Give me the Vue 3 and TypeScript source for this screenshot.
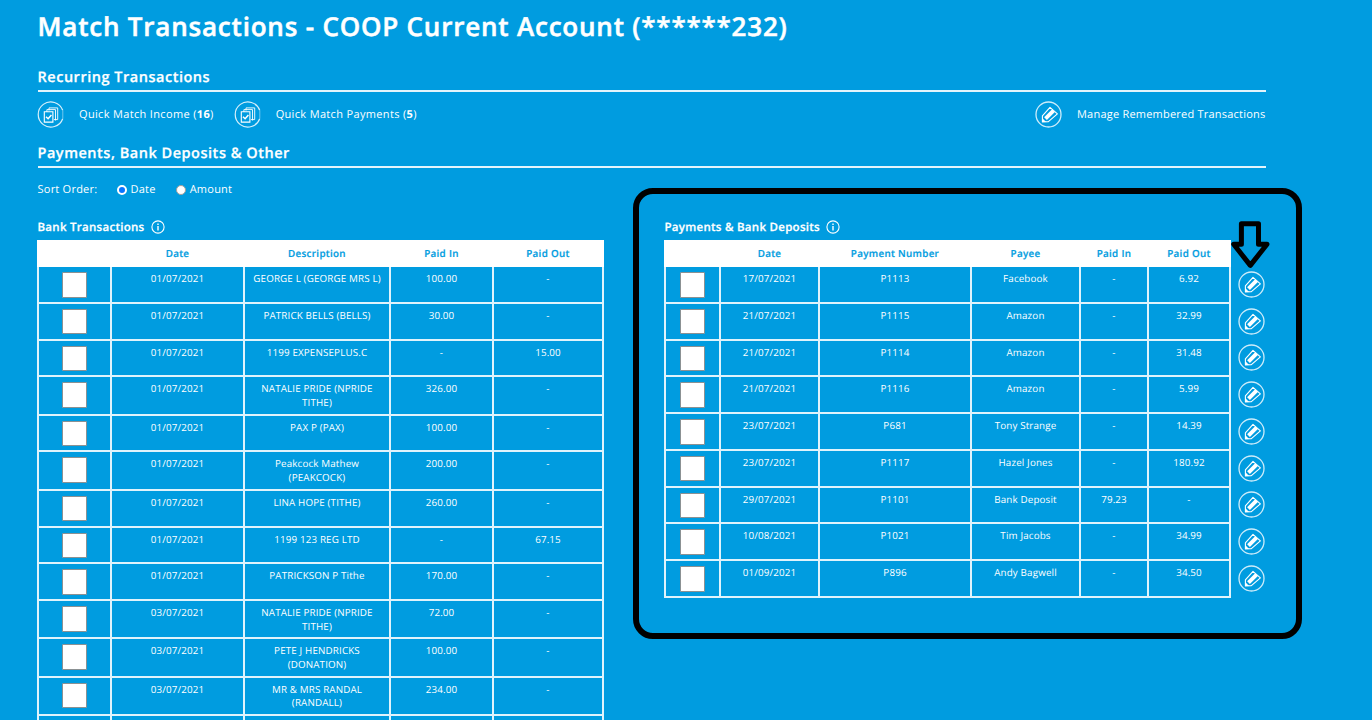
<script setup lang="ts">
interface BankRow {
  date: string
  description: string[]
  paidIn: string
  paidOut: string
}

interface PaymentRow {
  date: string
  number: string
  payee: string
  paidIn: string
  paidOut: string
}

const bankRows: BankRow[] = [
  { date: '01/07/2021', description: ['GEORGE L (GEORGE MRS L)'], paidIn: '100.00', paidOut: '-' },
  { date: '01/07/2021', description: ['PATRICK BELLS (BELLS)'], paidIn: '30.00', paidOut: '-' },
  { date: '01/07/2021', description: ['1199 EXPENSEPLUS.C'], paidIn: '-', paidOut: '15.00' },
  { date: '01/07/2021', description: ['NATALIE PRIDE (NPRIDE', 'TITHE)'], paidIn: '326.00', paidOut: '-' },
  { date: '01/07/2021', description: ['PAX P (PAX)'], paidIn: '100.00', paidOut: '-' },
  { date: '01/07/2021', description: ['Peakcock Mathew', '(PEAKCOCK)'], paidIn: '200.00', paidOut: '-' },
  { date: '01/07/2021', description: ['LINA HOPE (TITHE)'], paidIn: '260.00', paidOut: '-' },
  { date: '01/07/2021', description: ['1199 123 REG LTD'], paidIn: '-', paidOut: '67.15' },
  { date: '01/07/2021', description: ['PATRICKSON P Tithe'], paidIn: '170.00', paidOut: '-' },
  { date: '03/07/2021', description: ['NATALIE PRIDE (NPRIDE', 'TITHE)'], paidIn: '72.00', paidOut: '-' },
  { date: '03/07/2021', description: ['PETE J HENDRICKS', '(DONATION)'], paidIn: '100.00', paidOut: '-' },
  { date: '03/07/2021', description: ['MR & MRS RANDAL', '(RANDALL)'], paidIn: '234.00', paidOut: '-' },
  { date: '', description: [''], paidIn: '', paidOut: '' },
]

const paymentRows: PaymentRow[] = [
  { date: '17/07/2021', number: 'P1113', payee: 'Facebook', paidIn: '-', paidOut: '6.92' },
  { date: '21/07/2021', number: 'P1115', payee: 'Amazon', paidIn: '-', paidOut: '32.99' },
  { date: '21/07/2021', number: 'P1114', payee: 'Amazon', paidIn: '-', paidOut: '31.48' },
  { date: '21/07/2021', number: 'P1116', payee: 'Amazon', paidIn: '-', paidOut: '5.99' },
  { date: '23/07/2021', number: 'P681', payee: 'Tony Strange', paidIn: '-', paidOut: '14.39' },
  { date: '23/07/2021', number: 'P1117', payee: 'Hazel Jones', paidIn: '-', paidOut: '180.92' },
  { date: '29/07/2021', number: 'P1101', payee: 'Bank Deposit', paidIn: '79.23', paidOut: '-' },
  { date: '10/08/2021', number: 'P1021', payee: 'Tim Jacobs', paidIn: '-', paidOut: '34.99' },
  { date: '01/09/2021', number: 'P896', payee: 'Andy Bagwell', paidIn: '-', paidOut: '34.50' },
]

const quickMatches = [
  { label: 'Quick Match Income', count: 16 },
  { label: 'Quick Match Payments', count: 5 },
]
</script>

<template>
  <main class="page">
    <svg class="symbols" width="0" height="0" aria-hidden="true">
      <symbol id="pencil" viewBox="-13.5 -13.5 27 27">
        <circle r="12.5" fill="none" stroke="#cdecfa" stroke-width="1.3" />
        <path d="M1.5-7.2 8.9-.6-.4 7.3-6.1 7.4-6.1 1.4Z" fill="none" stroke="#fff" stroke-width="1.1" stroke-linejoin="round" />
        <path d="M5-3.9-3 4.2" stroke="#fff" stroke-width="3.8" />
        <path d="M-6.3 3.6-2.4 7.4-6.3 7.6Z" fill="#fff" />
      </symbol>
      <symbol id="documents" viewBox="-13.5 -13.5 27 27">
        <path d="M12.2-4.2A12.6 12.6 0 1 0 12.2 4.2" fill="none" stroke="#d8f0fb" stroke-width="1.2" />
        <path d="M12.3-4.2V4.2" stroke="#8dd2f2" stroke-width=".8" />
        <path d="M-1.5-4V-6.6H7.2V5.1H3.4M-3.6-2.5V-4.9H5V6" fill="none" stroke="#fff" stroke-width=".9" />
        <path d="M-6.2-2.7H2.4V7.6H-6.2Z" fill="none" stroke="#fff" stroke-width="1.1" />
        <path d="M-4.5 2.2-2.4 4.2.9.4" fill="none" stroke="#fff" stroke-width="1.5" />
      </symbol>
      <symbol id="info" viewBox="-7 -7 14 14">
        <circle r="6.1" fill="none" stroke="#fff" stroke-width="1.1" />
        <path d="M0-3.5V-2.1M0-1.1V3.6" stroke="#fff" stroke-width="1.4" />
      </symbol>
    </svg>

    <h1 class="title">Match Transactions - COOP Current Account (******232)</h1>

    <h2 class="section">Recurring Transactions</h2>
    <div class="actions">
      <a v-for="q in quickMatches" :key="q.label" class="action">
        <svg class="round"><use href="#documents" /></svg>
        <span>{{ q.label }} (<b>{{ q.count }}</b>)</span>
      </a>
      <a class="action manage">
        <svg class="round"><use href="#pencil" /></svg>
        <span>Manage Remembered Transactions</span>
      </a>
    </div>

    <h2 class="section">Payments, Bank Deposits &amp; Other</h2>
    <div class="sort">
      <span class="sort-label">Sort Order:</span>
      <label class="option"><i class="radio on"></i>Date</label>
      <label class="option"><i class="radio"></i>Amount</label>
    </div>

    <div class="columns">
      <section class="panel">
        <h3 class="caption"><span>Bank Transactions</span><svg class="info"><use href="#info" /></svg></h3>
        <div class="table bank">
          <div class="row head">
            <span></span><span>Date</span><span>Description</span><span>Paid In</span><span>Paid Out</span>
          </div>
          <div v-for="(r, i) in bankRows" :key="i" class="row" :class="{ tall: r.description.length > 1 }">
            <span class="cell"><i class="box"></i></span>
            <span class="cell">{{ r.date }}</span>
            <span class="cell"><span v-for="line in r.description" :key="line" class="line">{{ line }}</span></span>
            <span class="cell">{{ r.paidIn }}</span>
            <span class="cell">{{ r.paidOut }}</span>
          </div>
        </div>
      </section>

      <section class="panel">
        <h3 class="caption"><span>Payments &amp; Bank Deposits</span><svg class="info"><use href="#info" /></svg></h3>
        <div class="with-edit">
          <div class="table payments">
            <div class="row head">
              <span></span><span>Date</span><span>Payment Number</span><span>Payee</span><span>Paid In</span><span>Paid Out</span>
            </div>
            <div v-for="r in paymentRows" :key="r.number" class="row">
              <span class="cell"><i class="box"></i></span>
              <span class="cell">{{ r.date }}</span>
              <span class="cell">{{ r.number }}</span>
              <span class="cell">{{ r.payee }}</span>
              <span class="cell">{{ r.paidIn }}</span>
              <span class="cell">{{ r.paidOut }}</span>
            </div>
          </div>
          <div class="edits">
            <a v-for="r in paymentRows" :key="r.number" class="edit"><svg class="round"><use href="#pencil" /></svg></a>
          </div>
        </div>
      </section>
    </div>

    <div class="highlight"></div>
    <svg class="arrow" viewBox="0 0 40 50">
      <path d="M11.4 3.7H28.5V24.2H37L20.3 45.4 3.7 24.2H11.4Z" fill="none" stroke="#000" stroke-width="5" stroke-linejoin="round" />
    </svg>
  </main>
</template>

<style>
html,
body {
  margin: 0;
  background: #009ce0;
}
</style>

<style scoped>
.page {
  position: relative;
  box-sizing: border-box;
  width: 1372px;
  height: 720px;
  overflow: hidden;
  padding: 6px 106.5px 0 37.5px;
  background: #009ce0;
  color: #fff;
  font-family: "Open Sans", "Noto Sans", sans-serif;
  text-rendering: geometricPrecision;
  white-space: nowrap;
}

.symbols {
  position: absolute;
}

h1,
h2,
h3 {
  margin: 0;
  font-weight: 600;
  -webkit-text-stroke: .25px currentColor;
}

.title {
  height: 40px;
  line-height: 40px;
  font-size: 26px;
  letter-spacing: .8px;
  -webkit-text-stroke-width: .5px;
}

.section {
  box-sizing: border-box;
  height: 30px;
  margin-top: 16px;
  line-height: 32px;
  font-size: 14.5px;
  letter-spacing: .52px;
  border-bottom: 2px solid #e3f4fc;
}

.actions {
  display: flex;
  gap: 20px;
  height: 46px;
  margin-left: -.5px;
}

.actions + .section {
  margin-top: 0;
}

.action {
  display: flex;
  align-items: center;
  gap: 15px;
  height: 44px;
  font-size: 11px;
  letter-spacing: .34px;
}

.manage {
  margin-left: auto;
  letter-spacing: .22px;
}

.round {
  display: block;
  width: 27px;
  height: 27px;
}

.sort {
  display: flex;
  align-items: center;
  height: 42px;
  font-size: 11px;
  letter-spacing: .24px;
}

.sort-label {
  width: 79px;
}

.option {
  display: flex;
  align-items: center;
  gap: 4px;
  margin-right: 20px;
}

.radio {
  box-sizing: border-box;
  width: 10px;
  height: 10px;
  margin-top: 1px;
  border: 1px solid #a59f9b;
  border-radius: 50%;
  background: #fff;
}

.radio.on {
  border: 2px solid #fff;
  background: #0875ff;
}

.columns {
  display: flex;
  gap: 60px;
  margin-left: -.5px;
}

.caption {
  display: flex;
  align-items: center;
  gap: 6px;
  box-sizing: border-box;
  height: 30px;
  padding: 4px 0 0 .5px;
  font-size: 11.5px;
  letter-spacing: .28px;
}

.info {
  width: 14px;
  height: 14px;
}

.table {
  box-sizing: border-box;
  width: 567px;
  display: flex;
  flex-direction: column;
  gap: 2px;
  padding: 0 2px 2px;
  background: #dff3fc;
  font-size: 9.8px;
  letter-spacing: .15px;
}

.row {
  display: grid;
  grid-template-columns: var(--columns);
  gap: 2px;
  height: 34.75px;
}

.row.tall {
  height: 36.4px;
}

.bank {
  --columns: 71px 131px 144px 101px 108px;
}

.payments {
  --columns: 53px 97px 150px 107px 66px 80px;
}

.row.head {
  height: 27px;
  margin: 0 -2px -2px;
  padding: 0 2px;
  line-height: 27px;
  background: #fff;
  color: #009ce0;
  font-weight: 600;
  letter-spacing: .32px;
  text-align: center;
  -webkit-text-stroke: .2px currentColor;
}

.cell {
  padding-top: 5px;
  background: #009ce0;
  line-height: 13.5px;
  text-align: center;
}

.line {
  display: block;
}

.box {
  display: block;
  box-sizing: border-box;
  width: 25px;
  height: 25.5px;
  margin: 0 auto;
  border: 1px solid #8b9193;
  border-radius: 1px;
  background: #fff;
}

.with-edit {
  display: flex;
  gap: 7px;
}

.edits {
  padding-top: 26px;
}

.edit {
  display: flex;
  align-items: center;
  height: 36.75px;
}

.highlight {
  position: absolute;
  box-sizing: border-box;
  left: 632.5px;
  top: 188px;
  width: 669px;
  height: 451px;
  border: 6px solid #000;
  border-radius: 20px;
}

.arrow {
  position: absolute;
  left: 1230px;
  top: 220px;
  width: 40px;
  height: 50px;
}
</style>
